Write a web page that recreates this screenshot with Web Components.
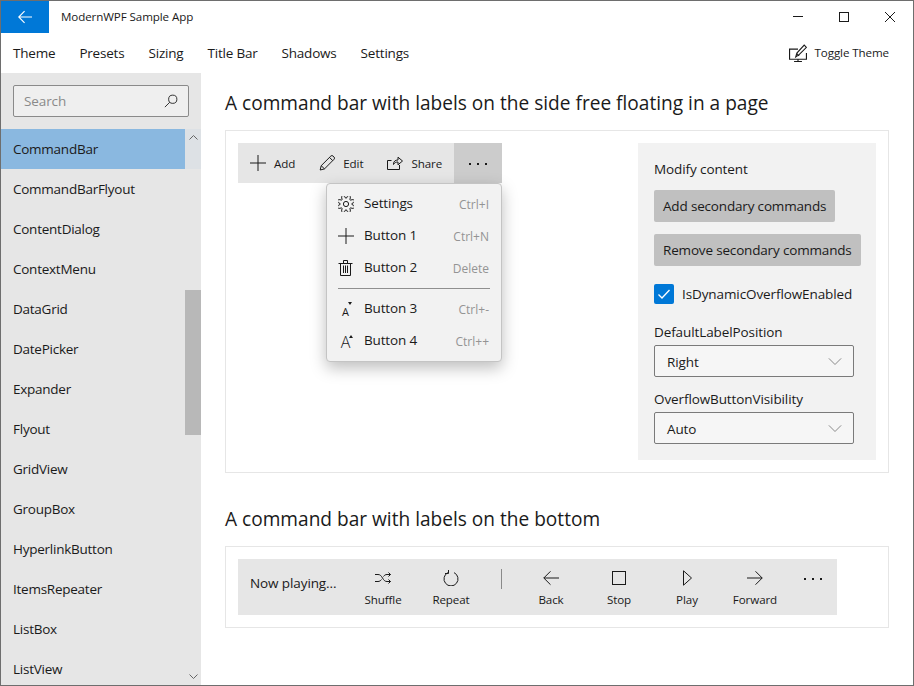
<!DOCTYPE html>
<html lang="en">
<head>
<meta charset="utf-8">
<title>ModernWPF Sample App</title>
<style>
  html, body { margin: 0; height: 100%; }
  body { font-family: "Open Sans", "Noto Sans", sans-serif; color: #1a1a1a; background: #fff; letter-spacing: -0.1px; }
</style>
</head>
<body>
<app-window>
  <title-bar slot="title" heading="ModernWPF Sample App"></title-bar>
  <menu-bar slot="menu">
    <menu-entry>Theme</menu-entry>
    <menu-entry>Presets</menu-entry>
    <menu-entry>Sizing</menu-entry>
    <menu-entry>Title Bar</menu-entry>
    <menu-entry>Shadows</menu-entry>
    <menu-entry>Settings</menu-entry>
  </menu-bar>
  <nav-pane slot="nav">
    <nav-item selected>CommandBar</nav-item>
    <nav-item>CommandBarFlyout</nav-item>
    <nav-item>ContentDialog</nav-item>
    <nav-item>ContextMenu</nav-item>
    <nav-item>DataGrid</nav-item>
    <nav-item>DatePicker</nav-item>
    <nav-item>Expander</nav-item>
    <nav-item>Flyout</nav-item>
    <nav-item>GridView</nav-item>
    <nav-item>GroupBox</nav-item>
    <nav-item>HyperlinkButton</nav-item>
    <nav-item>ItemsRepeater</nav-item>
    <nav-item>ListBox</nav-item>
    <nav-item>ListView</nav-item>
  </nav-pane>

  <demo-section heading="A command bar with labels on the side free floating in a page">
    <div style="display:flex;justify-content:space-between;align-items:flex-start">
      <command-bar open>
        <bar-button icon="add">Add</bar-button>
        <bar-button icon="edit">Edit</bar-button>
        <bar-button icon="share">Share</bar-button>
        <bar-more active></bar-more>
        <overflow-menu slot="popup">
          <overflow-item icon="settings" keys="Ctrl+I">Settings</overflow-item>
          <overflow-item icon="add" keys="Ctrl+N">Button 1</overflow-item>
          <overflow-item icon="trash" keys="Delete">Button 2</overflow-item>
          <overflow-rule></overflow-rule>
          <overflow-item icon="font-down" keys="Ctrl+-">Button 3</overflow-item>
          <overflow-item icon="font-up" keys="Ctrl++">Button 4</overflow-item>
        </overflow-menu>
      </command-bar>
      <options-panel></options-panel>
    </div>
  </demo-section>

  <demo-section heading="A command bar with labels on the bottom">
    <command-bar tall>
      <bar-content>Now playing...</bar-content>
      <bar-button below icon="shuffle">Shuffle</bar-button>
      <bar-button below icon="repeat">Repeat</bar-button>
      <bar-separator></bar-separator>
      <bar-button below icon="back">Back</bar-button>
      <bar-button below icon="stop">Stop</bar-button>
      <bar-button below icon="play">Play</bar-button>
      <bar-button below icon="forward">Forward</bar-button>
      <bar-more top></bar-more>
    </command-bar>
  </demo-section>
</app-window>

<script>
// gear outline: 8 rounded teeth around the centre of a 16 box
function gearPath() {
  let d = "";
  for (let i = 0; i < 8; i++) {
    const a = (i / 8) * Math.PI * 2 + Math.PI / 8;
    const pt = (r, off) => {
      const t = a + off;
      return (8 + r * Math.cos(t)).toFixed(2) + " " + (8 + r * Math.sin(t)).toFixed(2);
    };
    d += (i ? "A2.500 2.500 0 0 0 " : "M") + pt(5.9, -0.32) + "L" + pt(7.5, -0.22) + "A1.400 1.400 0 0 1 " + pt(7.5, 0.22) + "L" + pt(5.9, 0.32);
  }
  return d + "Z";
}

const ICONS = {
  add: '<path d="M8 0v16M0 8h16"/>',
  edit: '<path d="M1.200 15l1-4.300L11.800 1.100a1.600 1.600 0 0 1 2.300 0l.9.9a1.600 1.600 0 0 1 0 2.300L5.500 13.900zM2.200 10.700l3.300 3.200M10.500 2.400l3.200 3.200"/>',
  share: '<path d="M12.500 10v4.500H.5V5.500h4M6.500 9.500V9c0-2.600 1.800-4 4.500-4V2.200L15.500 6 11 9.800V7c-2 0-3.500.6-4.500 2.500z"/>',
  settings: '<path d="' + gearPath() + '"/><circle cx="8" cy="8" r="2.600"/>',
  trash: '<path d="M.5 3.500h14M2.500 3.500v12h10v-12M5.500 3.500v-3h4v3M5.500 5.500V13M7.500 5.500V13M9.500 5.500V13"/>',
  shuffle: '<path d="M0 4.500h3c2 0 3 1 4.500 3.500s2.500 3.500 4.500 3.500h3.500M0 11.500h3c1.500 0 2.500-.7 3.500-2M8.500 6.500c1-1.400 2-2 3.500-2h3.500M13.500 2.500l2 2-2 2M13.500 9.500l2 2-2 2"/>',
  repeat: '<path d="M5 2.600a7 7 0 1 0 6 0M5.500 0v3.500H2"/>',
  back: '<path d="M16 8H.8M7.500 1.300L.8 8l6.700 6.700"/>',
  forward: '<path d="M0 8h15.200M8.500 1.300L15.200 8l-6.700 6.700"/>',
  stop: '<rect x="1.500" y="1.500" width="13" height="13"/>',
  play: '<path d="M4.500.8L12.500 8l-8 7.200z"/>',
  search: '<circle cx="10" cy="6" r="4.700"/><path d="M6.600 9.400L1 15"/>',
  chevronDown: '<path d="M1 5l7 7 7-7"/>',
  close: '<path d="M3 3l10 10M13 3L3 13"/>',
  minimize: '<path d="M3 7.500h10"/>',
  maximize: '<rect x="3.500" y="3.500" width="9" height="9"/>',
  theme: '<path d="M8 4.500H.5v9h15V8M8 13.500v2M4.500 15.500h7"/><path d="M6 11.500l1-3.500 6.500-7 2 2-6.500 6.500zM7 8.500l2 2" fill="#fff"/>'
};

class UiIcon extends HTMLElement {
  connectedCallback() {
    if (this.shadowRoot) return;
    const root = this.attachShadow({ mode: "open" });
    const name = this.getAttribute("name");
    const size = this.getAttribute("size") || 16;
    const color = this.getAttribute("color") || "#1a1a1a";
    if (name === "font-down" || name === "font-up") {
      // these two are a real letter with a small caret in the reference
      const up = name === "font-up";
      root.innerHTML = `<style>
        :host { display: inline-flex; width: 16px; height: 16px; position: relative; justify-content: center; }
        span { font-size: ${up ? 16 : 11}px; font-weight: ${up ? 300 : 400}; line-height: 1; margin-top: ${up ? 1 : 5}px; margin-left: -1px; color: ${color}; }
        i { position: absolute; top: ${up ? 2 : 1}px; right: ${up ? 1 : 2}px; width: 0; height: 0; border: 2.500px solid transparent;
            ${up ? "border-bottom: 3px solid #1a1a1a; border-top: 0" : "border-top: 3px solid #1a1a1a; border-bottom: 0"}; }
      </style><span>A</span><i></i>`;
      return;
    }
    root.innerHTML = `<style>:host { display: inline-flex; width: ${size}px; height: ${size}px; } svg { display: block; }</style>
      <svg width="${size}" height="${size}" viewBox="0 0 16 16" fill="none" stroke="${color}" stroke-width="${this.getAttribute("stroke") || 1}">${ICONS[name]}</svg>`;
  }
}

// shorthand for the plain elements: a style, some markup and a slot
function define(tag, css, html) {
  customElements.define(tag, class extends HTMLElement {
    constructor() {
      super();
      const root = this.attachShadow({ mode: "open" });
      if (typeof html !== "function") {
        const tpl = document.createElement("template");
        tpl.innerHTML = `<style>${css}</style>${html}`;
        root.appendChild(tpl.content.cloneNode(true));
      }
    }
    connectedCallback() {
      if (typeof html !== "function" || this._done) return;
      this._done = true;
      const tpl = document.createElement("template");
      tpl.innerHTML = `<style>${css}</style>${html(this)}`;
      this.shadowRoot.appendChild(tpl.content.cloneNode(true));
    }
  });
}

customElements.define("ui-icon", UiIcon);

define("app-window", `
  :host { display: flex; flex-direction: column; box-sizing: border-box; width: 914px; height: 686px;
    border: 1px solid #6e6e6e; overflow: hidden; background: #fff; }
  .body { flex: 1; min-height: 0; display: flex; }
  main { flex: 1; padding: 16px 24px 0; }
`, `<slot name="title"></slot><slot name="menu"></slot>
  <div class="body"><slot name="nav"></slot><main><slot></slot></main></div>`);

define("title-bar", `
  :host { display: flex; height: 32px; align-items: stretch; }
  .back { width: 48px; background: #0078d7; display: flex; align-items: center; justify-content: center; }
  .title { flex: 1; padding-left: 12px; font-size: 11.600px; line-height: 32px; }
  .win { width: 46px; display: flex; align-items: center; justify-content: center; }
`, (el) => `<div class="back"><ui-icon name="back" color="#fff" size="14" stroke="1.300"></ui-icon></div>
  <div class="title">${el.getAttribute("heading") || ""}</div>
  <div class="win"><ui-icon name="minimize"></ui-icon></div>
  <div class="win"><ui-icon name="maximize"></ui-icon></div>
  <div class="win"><ui-icon name="close"></ui-icon></div>`);

define("menu-bar", `
  :host { display: flex; height: 40px; align-items: center; }
  .grow { flex: 1; }
  .toggle { display: flex; align-items: center; gap: 8px; padding: 0 12px; margin-right: 12px; font-size: 11.600px; }
  .toggle span { margin-top: -2px; }
`, `<slot></slot><span class="grow"></span>
  <div class="toggle"><ui-icon name="theme" size="18"></ui-icon><span>Toggle Theme</span></div>`);

define("menu-entry", `:host { display: block; padding: 0 12px; font-size: 13.500px; line-height: 40px; letter-spacing: -0.2px; }`, `<slot></slot>`);

define("nav-pane", `
  :host { display: flex; flex-direction: column; position: relative; width: 200px; height: 100%; background: #e6e6e6; overflow: hidden; }
  .search { flex: none; display: flex; align-items: center; justify-content: space-between; box-sizing: border-box; height: 32px; margin: 12px;
    padding: 0 10px; background: #efefef; border: 1px solid #8a8a8a; border-radius: 2px; font-size: 13.500px; color: #8a8a8a; }
  .list { display: block; flex: none; }
  .track { position: absolute; top: 56px; right: 0; bottom: 0; width: 16px; background: rgba(230,230,230,.9);
    display: flex; flex-direction: column; align-items: center; }
  .track svg { display: block; flex: none; margin-top: 6px; }
  .thumb { width: 16px; height: 145px; margin-top: 150px; background: #b8b8b8; flex: none; }
  .track .down { margin-top: auto; margin-bottom: 6px; }
`, `<div class="search">Search<ui-icon name="search" size="14"></ui-icon></div>
  <div class="list"><slot></slot></div>
  <div class="track">
    <svg width="9" height="5" viewBox="0 0 9 5" fill="none" stroke="#666"><path d="M.5 4.500l4-4 4 4"/></svg>
    <div class="thumb"></div>
    <svg class="down" width="9" height="5" viewBox="0 0 9 5" fill="none" stroke="#666"><path d="M.5.500l4 4 4-4"/></svg>
  </div>`);

define("nav-item", `
  :host { display: block; height: 40px; line-height: 40px; padding-left: 12px; font-size: 13.500px; letter-spacing: -0.25px; }
  :host([selected]) { background: #8ab8e0; }
`, `<slot></slot>`);

define("demo-section", `
  :host { display: block; margin-bottom: 32px; }
  h2 { margin: 0 0 13px; font-size: 19.100px; font-weight: 400; line-height: 28px; letter-spacing: 0; }
  .card { border: 1px solid #e6e6e6; padding: 12px; }
`, (el) => `<h2>${el.getAttribute("heading")}</h2><div class="card"><slot></slot></div>`);

define("command-bar", `
  :host { display: inline-flex; position: relative; height: 40px; background: #e6e6e6; align-items: stretch; }
  :host([tall]) { display: flex; width: max-content; height: 56px; }
`, `<slot></slot><slot name="popup"></slot>`);

define("bar-button", `
  :host { display: flex; align-items: center; gap: 8px; padding: 0 12px; font-size: 11.600px; }
  :host([below]) { flex-direction: column; justify-content: flex-start; gap: 6px; width: 68px; padding: 11px 0 0; box-sizing: border-box; }
`, (el) => `<ui-icon name="${el.getAttribute("icon")}"></ui-icon><span><slot></slot></span>`);

define("bar-more", `
  :host { display: flex; width: 48px; justify-content: center; align-items: center; gap: 6px; padding-top: 1px; box-sizing: border-box; }
  :host([active]) { background: #cccccc; }
  :host([top]) { align-items: flex-start; padding-top: 19px; }
  i { width: 2px; height: 2px; background: #1a1a1a; }
`, `<i></i><i></i><i></i>`);

define("bar-content", `:host { display: block; width: 99px; padding: 0 0 0 12px; font-size: 13.500px; line-height: 48px; }`, `<slot></slot>`);

define("bar-separator", `
  :host { display: flex; width: 32px; justify-content: center; padding-top: 10px; box-sizing: border-box; }
  i { width: 1px; height: 20px; background: #8a8a8a; }
`, `<i></i>`);

define("overflow-menu", `
  :host { display: block; position: absolute; left: 88px; top: 40px; width: 176px; box-sizing: border-box; padding: 4px 0;
    background: #f2f2f2; border: 1px solid #c4c4c4; border-radius: 4px; box-shadow: 0 6px 16px rgba(0,0,0,.26); z-index: 2; }
`, `<slot></slot>`);

define("overflow-item", `
  :host { display: flex; align-items: center; height: 32px; padding: 0 12px 0 11px; font-size: 13.500px; letter-spacing: -0.15px; }
  .label { flex: 1; margin-left: 10px; margin-top: -2px; }
  .keys { font-size: 12px; letter-spacing: 0; color: #949494; }
`, (el) => `<ui-icon name="${el.getAttribute("icon")}"></ui-icon><span class="label"><slot></slot></span>
  <span class="keys">${el.getAttribute("keys")}</span>`);

define("overflow-rule", `
  :host { display: block; padding: 4px 11px; }
  i { display: block; height: 1px; background: #8f8f8f; }
`, `<i></i>`);

define("push-button", `
  :host { display: block; width: max-content; box-sizing: border-box; height: 32px; padding: 0 9px; line-height: 32px;
    background: #c0c0c0; border-radius: 2px; font-size: 13.500px; letter-spacing: -0.17px; }
`, `<slot></slot>`);

define("check-box", `
  :host { display: flex; align-items: center; gap: 8px; font-size: 13.500px; height: 20px; }
  .box { width: 20px; height: 20px; background: #0078d7; border-radius: 2px; display: flex; align-items: center; justify-content: center; }
`, `<span class="box"><svg width="14" height="14" viewBox="0 0 14 14" fill="none" stroke="#fff" stroke-width="1.300"><path d="M1.500 7.500L5 11l7.500-8"/></svg></span><slot></slot>`);

define("combo-box", `
  :host { display: block; font-size: 13.500px; }
  label { display: block; line-height: 20px; margin-bottom: 3px; }
  .box { display: flex; align-items: center; justify-content: space-between; box-sizing: border-box; width: 200px; height: 32px;
    padding: 0 11px 0 12px; background: #f6f6f6; border: 1px solid #7a7a7a; border-radius: 2px; }
  .box span { padding-top: 2px; }
`, (el) => `<label>${el.getAttribute("label")}</label><div class="box"><span>${el.getAttribute("value")}</span>
  <ui-icon name="chevronDown" size="14" color="#7a7a7a"></ui-icon></div>`);

define("options-panel", `
  :host { display: block; box-sizing: border-box; width: 238px; height: 317px; padding: 16px; background: #f2f2f2; font-size: 13.500px; }
  .head { line-height: 20px; margin-bottom: 11px; }
  push-button { margin-bottom: 12px; }
  check-box { margin: 18px 0; }
  combo-box { margin-bottom: 12px; }
`, `<div class="head">Modify content</div>
  <push-button>Add secondary commands</push-button>
  <push-button>Remove secondary commands</push-button>
  <check-box>IsDynamicOverflowEnabled</check-box>
  <combo-box label="DefaultLabelPosition" value="Right"></combo-box>
  <combo-box label="OverflowButtonVisibility" value="Auto"></combo-box>`);
</script>
</body>
</html>
